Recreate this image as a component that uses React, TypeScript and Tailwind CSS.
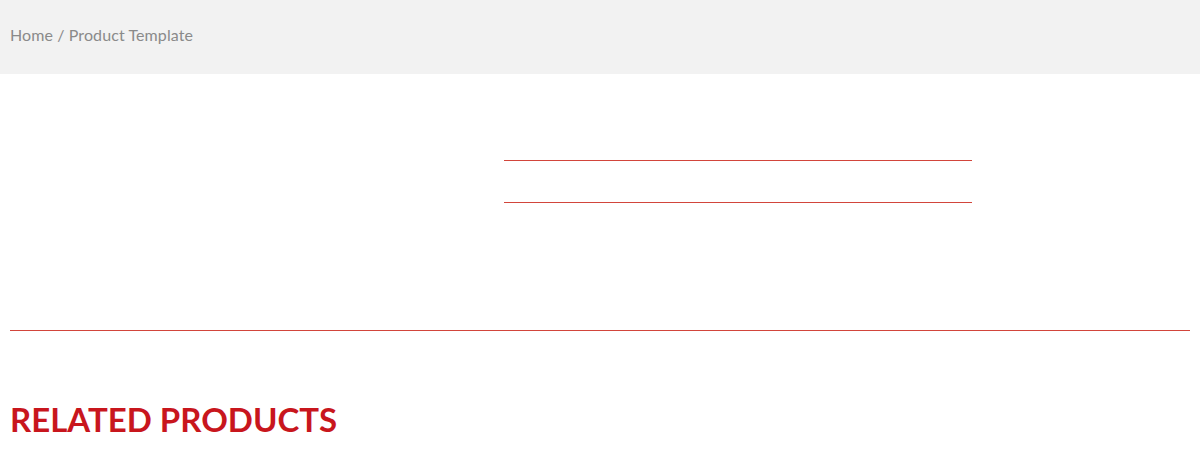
export default function App() {
  return (
    <div className="w-[1200px] h-[466px] bg-white overflow-hidden" style={{ fontFamily: "Lato, 'Open Sans', sans-serif" }}>
      <div className="h-[74px] bg-[#f2f2f2] flex items-center px-[10px]">
        <div className="text-[16px] text-[#8a8a8a] leading-none pb-[4px] tracking-[0.1px]">Home / Product Template</div>
      </div>
      <div className="px-[10px]">
        <div className="flex h-[256px]">
          <div className="w-[494px]" />
          <div className="w-[468px] flex flex-col">
            <div className="h-[87px] border-b border-[#d2453b]" />
            <div className="h-[42px] border-b border-[#d2453b]" />
          </div>
        </div>
        <div className="border-t border-[#d2453b]" />
        <h2 className="mt-[72px] text-[33px] font-bold text-[#c8161d] leading-none">RELATED PRODUCTS</h2>
      </div>
    </div>
  );
}
